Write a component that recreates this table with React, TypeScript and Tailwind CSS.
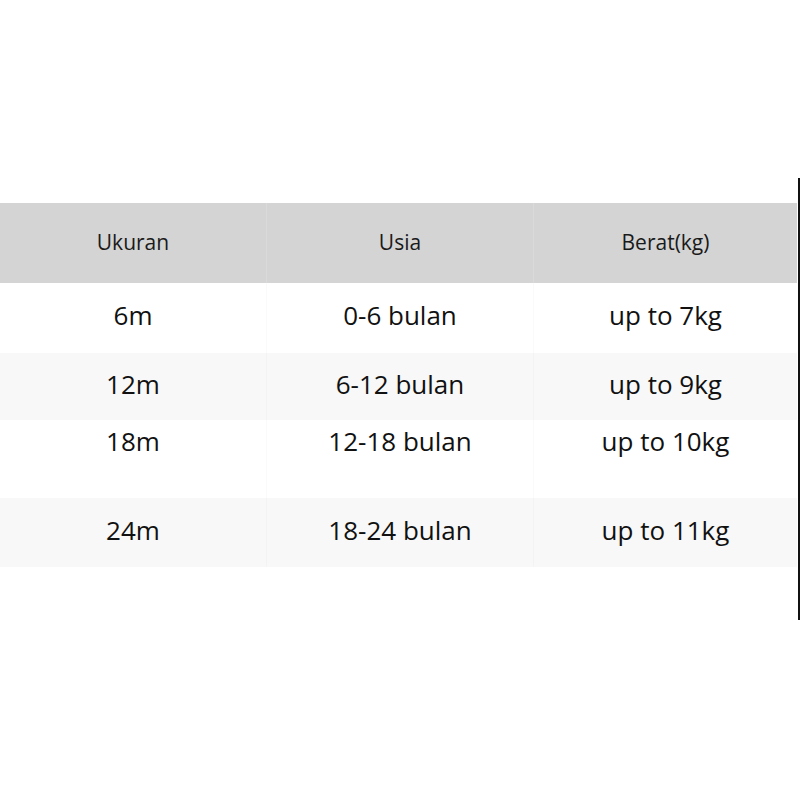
const header = ["Ukuran", "Usia", "Berat(kg)"];

const rows = [
  { cells: ["6m", "0-6 bulan", "up to 7kg"], h: "h-[70px]", bg: "bg-white", align: "items-center pb-[5px]" },
  { cells: ["12m", "6-12 bulan", "up to 9kg"], h: "h-[67px]", bg: "bg-[#f8f8f8]", align: "items-center pb-[5px]" },
  { cells: ["18m", "12-18 bulan", "up to 10kg"], h: "h-[78px]", bg: "bg-white", align: "items-start pt-[2px]" },
  { cells: ["24m", "18-24 bulan", "up to 11kg"], h: "h-[69px]", bg: "bg-[#f8f8f8]", align: "items-center pb-[5px]" },
];

export default function App() {
  return (
    <div className="w-[800px] h-[800px] bg-white pt-[178px]" style={{ fontFamily: '"Open Sans", "Noto Sans", sans-serif' }}>
      <div className="w-[800px] h-[442px] border-r-2 border-[#111] pt-[25px]">
        <div className="w-[797px]">
          <div className="grid grid-cols-[267px_267px_263px] h-[80px] bg-[#d4d4d4]">
            {header.map((t, i) => (
              <div
                key={t}
                className={`flex items-center justify-center text-[21px] text-[#1a1a1a] ${i < 2 ? "border-r border-[#dadada]" : ""}`}
              >
                {t}
              </div>
            ))}
          </div>
          {rows.map((r) => (
            <div key={r.cells[0]} className={`grid grid-cols-[267px_267px_263px] ${r.h} ${r.bg}`}>
              {r.cells.map((t, i) => (
                <div
                  key={i}
                  className={`flex ${r.align} justify-center text-[26px] text-[#111] ${i < 2 ? "border-r border-black/[0.02]" : ""}`}
                >
                  {t}
                </div>
              ))}
            </div>
          ))}
        </div>
      </div>
    </div>
  );
}
